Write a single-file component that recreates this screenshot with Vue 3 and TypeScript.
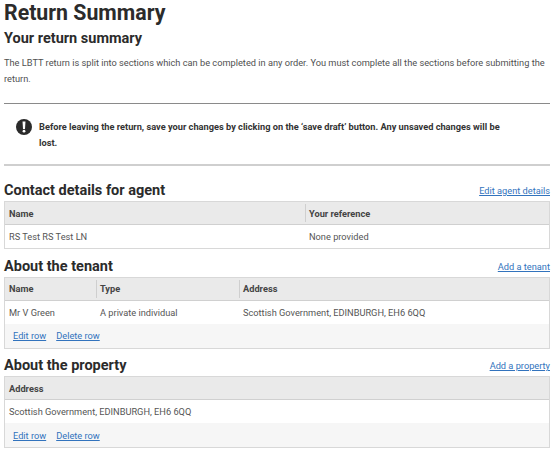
<script setup lang="ts">
interface Section {
  title: string
  action: string
  columns: { label: string; width: string }[]
  values: string[]
  rowActions: boolean
}

const sections: Section[] = [
  {
    title: 'Contact details for agent',
    action: 'Edit agent details',
    columns: [
      { label: 'Name', width: '300px' },
      { label: 'Your reference', width: '1fr' },
    ],
    values: ['RS Test RS Test LN', 'None provided'],
    rowActions: false,
  },
  {
    title: 'About the tenant',
    action: 'Add a tenant',
    columns: [
      { label: 'Name', width: '91px' },
      { label: 'Type', width: '143px' },
      { label: 'Address', width: '1fr' },
    ],
    values: ['Mr V Green', 'A private individual', 'Scottish Government, EDINBURGH, EH6 6QQ'],
    rowActions: true,
  },
  {
    title: 'About the property',
    action: 'Add a property',
    columns: [{ label: 'Address', width: '1fr' }],
    values: ['Scottish Government, EDINBURGH, EH6 6QQ'],
    rowActions: true,
  },
]

const gridFor = (s: Section) => ({ gridTemplateColumns: s.columns.map((c) => c.width).join(' ') })
</script>

<template>
  <main class="page">
    <h1>Return Summary</h1>
    <h2>Your return summary</h2>
    <p class="intro">
      The LBTT return is split into sections which can be completed in any order. You must complete all the sections before submitting the return.
    </p>
    <div class="notice">
      <svg class="notice-icon" viewBox="0 0 16 16" width="16" height="16" aria-hidden="true">
        <circle cx="8" cy="8" r="8" fill="#2b2b2b" />
        <path d="M6.5 2.6h3L9 10H7z" fill="#fff" />
        <circle cx="8" cy="12.2" r="1.4" fill="#fff" />
      </svg>
      <p>Before leaving the return, save your changes by clicking on the ‘save draft’ button. Any unsaved changes will be lost.</p>
    </div>
    <section v-for="s in sections" :key="s.title" class="section">
      <header class="section-head">
        <h3>{{ s.title }}</h3>
        <a href="#">{{ s.action }}</a>
      </header>
      <div class="panel">
        <div class="row head" :style="gridFor(s)">
          <div v-for="c in s.columns" :key="c.label" class="th"><span>{{ c.label }}</span></div>
        </div>
        <div class="row body" :style="gridFor(s)">
          <div v-for="v in s.values" :key="v" class="td">{{ v }}</div>
        </div>
        <div v-if="s.rowActions" class="actions">
          <a href="#">Edit row</a>
          <a href="#">Delete row</a>
        </div>
      </div>
    </section>
  </main>
</template>

<style>
html, body { background: #fff; }
</style>

<style scoped>
.page {
  box-sizing: border-box;
  width: 552px;
  height: 452px;
  overflow: hidden;
  padding: 0 2px 0 4px;
  font-family: Roboto, "Liberation Sans", sans-serif;
  font-size: 9.24px;
  color: #555;
}
h1, h2, h3, p { margin: 0; }
h1 {
  font-size: 21.3px;
  line-height: 26px;
  font-weight: 700;
  color: #2b2b2b;
}
h2 {
  margin-top: 3px;
  font-size: 14.5px;
  line-height: 20px;
  font-weight: 700;
  color: #2b2b2b;
}
.intro {
  margin-top: 6px;
  line-height: 16px;
  padding-bottom: 16px;
  color: #505050;
}
.notice {
  display: flex;
  align-items: flex-start;
  gap: 7px;
  height: 63px;
  box-sizing: border-box;
  padding: 15px 46px 0 12px;
  border-top: 1px solid #8a8a8a;
  border-bottom: 2px solid #cfcfcf;
  font-weight: 700;
  line-height: 16px;
  color: #333;
}
.notice-icon { flex: none; }
.section { margin-top: 7.5px; }
.notice + .section { margin-top: 15px; }
.section-head {
  display: flex;
  justify-content: space-between;
  align-items: flex-end;
  height: 20px;
}
h3 {
  font-size: 14.5px;
  line-height: 20px;
  font-weight: 700;
  color: #2b2b2b;
}
a { color: #3273bd; text-decoration: underline; }
.section-head a { padding-bottom: 3px; line-height: 14px; }
.panel {
  border: 1px solid #d8d8d8;
  background: #f6f6f6;
}
.row { display: grid; }
.head {
  height: 23px;
  background: #eaeaea;
  border-bottom: 1px solid #d0d0d0;
  box-sizing: border-box;
}
.th {
  display: flex;
  align-items: center;
  padding: 0 4px;
  font-weight: 700;
  color: #444;
  position: relative;
}
.th + .th::before {
  content: "";
  position: absolute;
  left: 0;
  top: 2px;
  bottom: 2px;
  width: 1px;
  background: #cfcfcf;
}
.body { background: #fff; height: 23px; align-items: center; }
.td { padding: 0 4px; }
.actions {
  display: flex;
  gap: 10px;
  height: 24px;
  align-items: center;
  padding-left: 8px;
}
</style>
